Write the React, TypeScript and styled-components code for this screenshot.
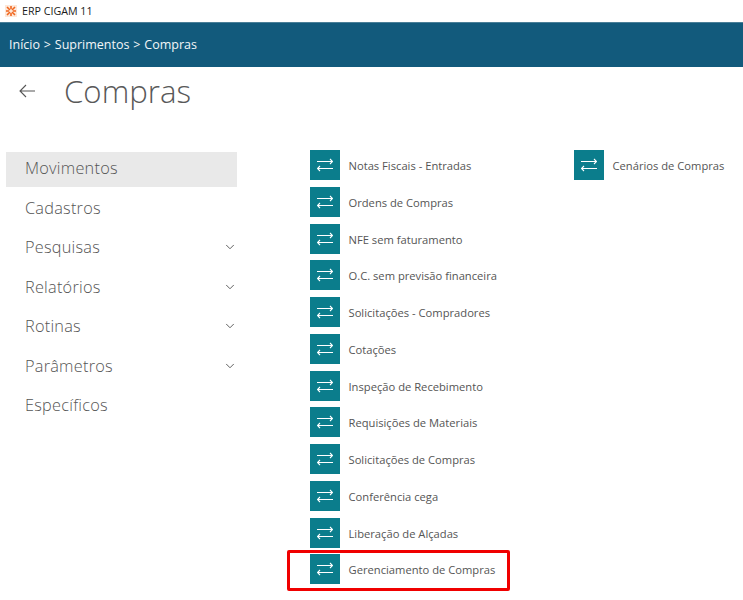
import React from 'react';
import styled, { createGlobalStyle } from 'styled-components';
import { ChevronDown } from 'lucide-react';

const GlobalStyle = createGlobalStyle`
    html, body {
        margin: 0;
        padding: 0;
        background: #ffffff;
        font-family: "Open Sans", "Noto Sans", sans-serif;
    }
`;

const Page = styled.div`
    width: 743px;
    height: 600px;
    overflow: hidden;
    display: flex;
    flex-direction: column;
`;

const TitleBar = styled.div`
    height: 22px;
    display: flex;
    align-items: center;
    gap: 5px;
    padding-left: 5px;
    font-size: 10.7px;
    color: #1a1a1a;
`;

const Breadcrumb = styled.div`
    height: 45px;
    box-sizing: border-box;
    background: #125a7c;
    border-top: 1px solid #4a7f98;
    display: flex;
    align-items: center;
    padding: 0 0 2px 9px;
    font-size: 12.5px;
    word-spacing: 0.6px;
    color: #f2f6f8;
`;

const Heading = styled.div`
    height: 85px;
    display: flex;
    align-items: flex-start;
    padding: 0 0 0 19px;
`;

const BackArrow = styled.svg`
    width: 16px;
    height: 14px;
    margin-top: 17px;
    color: #555555;
`;

const Title = styled.h1`
    margin: 0 0 0 29px;
    font-size: 31.2px;
    line-height: 48px;
    font-weight: 300;
    color: #595959;
`;

const Content = styled.div`
    display: flex;
    align-items: flex-start;
    padding-left: 6px;
`;

const Menu = styled.nav`
    width: 231px;
    flex-shrink: 0;
    display: flex;
    flex-direction: column;
`;

const MenuItem = styled.div<{ $active?: boolean }>`
    height: 39.5px;
    box-sizing: border-box;
    display: flex;
    align-items: center;
    justify-content: space-between;
    padding: 0 0 7px 19px;
    font-size: 16.3px;
    font-weight: 300;
    letter-spacing: 0.25px;
    color: #555555;
    background: ${(p) => (p.$active ? 'linear-gradient(#e9e9e9 35px, transparent 35px)' : 'none')};
`;

const Chevron = styled(ChevronDown)`
    width: 14px;
    height: 14px;
    color: #555555;
`;

const Columns = styled.div`
    display: flex;
    flex-shrink: 0;
    margin-left: 73px;
    margin-top: -2px;
`;

const Column = styled.div`
    width: 264px;
    display: flex;
    flex-direction: column;
`;

const Row = styled.div`
    position: relative;
    height: 36.75px;
    display: flex;
    align-items: flex-start;
    gap: 8.5px;
`;

const IconBox = styled.div`
    width: 30px;
    height: 30px;
    background: #0b7d8c;
    display: flex;
    align-items: center;
    justify-content: center;
    flex-shrink: 0;
`;

const Label = styled.span`
    font-size: 11.2px;
    line-height: 32px;
    color: #555555;
`;

const Highlight = styled.div`
    position: absolute;
    left: -23px;
    top: -4px;
    width: 223px;
    height: 41px;
    box-sizing: border-box;
    border: 3px solid #f00000;
    border-radius: 2px;
`;

const Transfer = () => (
    <svg width="16" height="14" viewBox="0 0 16 14" fill="none" stroke="#ffffff" strokeWidth="1.1">
        <path d="M0 3.5H15.5M13 1L15.5 3.5L13 6" />
        <path d="M16 10.5H0.5M3 8L0.5 10.5L3 13" />
    </svg>
);

const LogoIcon = () => (
    <svg width="12" height="12" viewBox="0 0 12 12">
        <rect width="12" height="12" fill="#fde7d8" />
        <path d="M2 2L5 5M10 2L7 5M2 10L5 7M10 10L7 7M6 1V4M6 8V11M1 6H4M8 6H11" stroke="#f0661e" strokeWidth="1.6" />
    </svg>
);

const menuItems = [
    { name: 'Movimentos', active: true },
    { name: 'Cadastros' },
    { name: 'Pesquisas', sub: true },
    { name: 'Relatórios', sub: true },
    { name: 'Rotinas', sub: true },
    { name: 'Parâmetros', sub: true },
    { name: 'Específicos' },
];

const firstColumn = [
    'Notas Fiscais - Entradas',
    'Ordens de Compras',
    'NFE sem faturamento',
    'O.C. sem previsão financeira',
    'Solicitações - Compradores',
    'Cotações',
    'Inspeção de Recebimento',
    'Requisições de Materiais',
    'Solicitações de Compras',
    'Conferência cega',
    'Liberação de Alçadas',
    'Gerenciamento de Compras',
];

export default function App() {
    return (
        <Page>
            <GlobalStyle />
            <TitleBar>
                <LogoIcon />
                ERP CIGAM 11
            </TitleBar>
            <Breadcrumb>Início &gt; Suprimentos &gt; Compras</Breadcrumb>
            <Heading>
                <BackArrow viewBox="0 0 16 14" fill="none" stroke="currentColor" strokeWidth="1.1">
                    <path d="M16 7H1M7 1L1 7L7 13" />
                </BackArrow>
                <Title>Compras</Title>
            </Heading>
            <Content>
                <Menu>
                    {menuItems.map((item) => (
                        <MenuItem key={item.name} $active={item.active}>
                            <span>{item.name}</span>
                            {item.sub && <Chevron strokeWidth={1.6} />}
                        </MenuItem>
                    ))}
                </Menu>
                <Columns>
                    <Column>
                        {firstColumn.map((name) => (
                            <Row key={name}>
                                <IconBox>
                                    <Transfer />
                                </IconBox>
                                <Label>{name}</Label>
                                {name === 'Gerenciamento de Compras' && <Highlight />}
                            </Row>
                        ))}
                    </Column>
                    <Column>
                        <Row>
                            <IconBox>
                                <Transfer />
                            </IconBox>
                            <Label>Cenários de Compras</Label>
                        </Row>
                    </Column>
                </Columns>
            </Content>
        </Page>
    );
}
